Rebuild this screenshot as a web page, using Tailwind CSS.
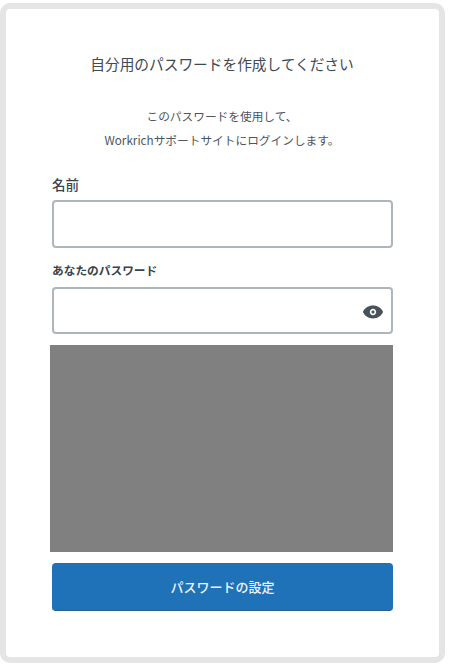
<!DOCTYPE html>
<html>
<head>
    <title>パスワードの設定</title>
    <script src="https://cdn.jsdelivr.net/npm/@tailwindcss/browser@4"></script>
</head>
<body class="bg-white font-['Noto_Sans_CJK_JP','Noto_Sans',sans-serif]">
    <div class="w-[449px] h-[664px] overflow-hidden pt-[3px]">
        <div class="w-[445px] h-[660px] bg-white border-[6px] border-[#e5e5e5] rounded-[10px] pl-[44px] pr-[45px] pt-[43px] flex flex-col">
            <h1 class="text-[14.7px] leading-6 text-center text-[#3f4a54] font-normal">自分用のパスワードを作成してください</h1>

            <p class="mt-[28px] text-[11.7px] leading-6 text-center text-[#4b5660]">このパスワードを使用して、<br>Workrichサポートサイトにログインします。</p>

            <label class="mt-[22px] ml-[2px] text-[13.5px] leading-5 font-medium text-[#3a434c]" for="name">名前</label>
            <input id="name" type="text" class="mt-[6px] ml-[2px] w-[341px] h-[48px] bg-white border-2 border-[#aeb6bd] rounded-[4px]">

            <label class="mt-[12px] ml-[2px] text-[11.7px] leading-5 font-bold text-[#3a434c]" for="password">あなたのパスワード</label>
            <div class="relative mt-[7px] ml-[2px] w-[341px] h-[47px]">
                <input id="password" type="password" class="w-full h-full bg-white border-2 border-[#aeb6bd] rounded-[4px]">
                <svg class="absolute right-[9px] top-[14px] w-[22px] h-[22px]" viewBox="0 0 24 24" fill="#48525c"><path d="M12 5C7 5 2.73 7.9 1 12c1.73 4.1 6 7 11 7s9.27-2.9 11-7c-1.73-4.1-6-7-11-7zm0 10.5c-1.93 0-3.5-1.57-3.5-3.5s1.57-3.5 3.5-3.5 3.5 1.57 3.5 3.5-1.57 3.5-3.5 3.5zm0-5.2c-.94 0-1.7.76-1.7 1.7s.76 1.7 1.7 1.7 1.7-.76 1.7-1.7-.76-1.7-1.7-1.7z" fill-rule="evenodd"/></svg>
            </div>

            <div class="mt-[11px] w-[343px] h-[207px] shrink-0 bg-[#808080]"></div>

            <button class="mt-[11px] ml-[2px] w-[341px] h-[48px] shrink-0 bg-[#1f72b8] border-b border-[#2a5f8c] rounded-[4px] text-[#eef4f9] text-[13px] font-medium">パスワードの設定</button>
        </div>
    </div>
</body>
</html>
